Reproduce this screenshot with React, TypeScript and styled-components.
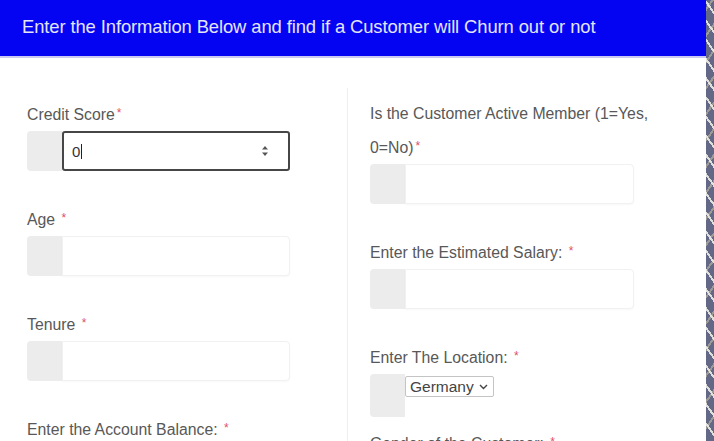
import React from "react";
import styled, { createGlobalStyle } from "styled-components";

const Global = createGlobalStyle`
  html, body { margin: 0; padding: 0; background: #ffffff; }
  body { font-family: "Liberation Sans", Arial, sans-serif; }
`;

const Page = styled.div`
  display: flex;
  width: 714px;
  height: 441px;
  overflow: hidden;
`;

const Main = styled.div`
  flex: 1;
  display: flex;
  flex-direction: column;
  background: #ffffff;
  overflow: hidden;
`;

const Header = styled.div`
  flex-shrink: 0;
  height: 58px;
  box-sizing: border-box;
  padding: 16px 0 0 22px;
  background: #0404f2;
  color: #e4e4fb;
  font-size: 18.4px;
  line-height: 22px;
  border-bottom: 2px solid #c9c9f4;
  letter-spacing: -0.1px;
`;

const Body = styled.div`
  flex: 1;
  display: flex;
  padding: 30px 0 0 27px;
`;

const Column = styled.div<{ $right?: boolean }>`
  box-sizing: border-box;
  width: ${(p) => (p.$right ? "330px" : "320px")};
  flex-shrink: 0;
  padding-top: 9px;
  padding-left: ${(p) => (p.$right ? "22px" : "0")};
  border-left: ${(p) => (p.$right ? "1px solid #efefef" : "none")};
`;

const Field = styled.div<{ $tight?: boolean }>`
  margin-bottom: ${(p) => (p.$tight ? "9px" : "31px")};
`;

const Label = styled.div`
  font-size: 15.8px;
  line-height: 33px;
  color: #585858;
  width: 300px;
`;

const Req = styled.span`
  color: #e0506a;
  font-size: 12px;
  vertical-align: 3px;
  margin-left: 2px;
`;

const Group = styled.div<{ $w: number }>`
  display: flex;
  width: ${(p) => p.$w}px;
  height: 40px;
`;

const Addon = styled.div<{ $h?: number }>`
  width: 35px;
  height: ${(p) => (p.$h ? `${p.$h}px` : "100%")};
  flex-shrink: 0;
  background: #ececec;
  border-radius: 4px 0 0 4px;
`;

const Input = styled.div<{ $focus?: boolean }>`
  flex: 1;
  display: flex;
  align-items: center;
  box-sizing: border-box;
  padding: 0 ${(p) => (p.$focus ? "19px" : "12px")} 0 ${(p) => (p.$focus ? "8px" : "12px")};
  background: #ffffff;
  border: ${(p) => (p.$focus ? "2px solid #464646" : "1px solid #f1f1f1")};
  border-radius: ${(p) => (p.$focus ? "3px" : "0 4px 4px 0")};
  box-shadow: ${(p) => (p.$focus ? "none" : "0 1px 2px rgba(0,0,0,0.03)")};
  font-size: 15px;
  color: #333;
`;

const Value = styled.span`
  flex: 1;
  display: flex;
  align-items: center;
`;

const Caret = styled.span`
  display: inline-block;
  width: 1px;
  height: 15px;
  background: #222;
  margin-left: 1px;
`;

const SelectWrap = styled.div`
  display: flex;
  align-items: flex-start;
`;

const SelectBox = styled.div`
  display: flex;
  align-items: center;
  gap: 5px;
  margin-top: 2px;
  height: 21px;
  box-sizing: border-box;
  padding: 0 5px 0 4px;
  border: 1px solid #c4c4c4;
  border-radius: 2px;
  background: #fff;
  font-size: 15.5px;
  color: #444;
`;

const Strip = styled.div`
  width: 8px;
  flex-shrink: 0;
  background-color: #626886;
  background-image:
    repeating-linear-gradient(55deg, transparent 0 9px, rgba(236,236,228,0.9) 9px 11px),
    repeating-linear-gradient(-55deg, transparent 0 13px, rgba(205,195,165,0.55) 13px 15px);
`;

const Spinner = () => (
  <svg width="8" height="12" viewBox="0 0 8 12">
    <path d="M4 1 L7 4.5 H1 Z" fill="#555" />
    <path d="M4 11 L7 7.5 H1 Z" fill="#555" />
  </svg>
);

const Chevron = () => (
  <svg width="9" height="6" viewBox="0 0 9 6">
    <path d="M1 1 L4.5 4.5 L8 1" fill="none" stroke="#444" strokeWidth="1.4" />
  </svg>
);

const TextField = ({ label, focus, value, width }: { label: React.ReactNode; focus?: boolean; value?: string; width: number }) => (
  <Field>
    <Label>{label}</Label>
    <Group $w={width}>
      <Addon />
      <Input $focus={focus}>
        {value !== undefined && (
          <>
            <Value>
              {value}
              <Caret />
            </Value>
            <Spinner />
          </>
        )}
      </Input>
    </Group>
  </Field>
);

export default function App() {
  return (
    <Page>
      <Global />
      <Main>
        <Header>Enter the Information Below and find if a Customer will Churn out or not</Header>
        <Body>
          <Column>
            <TextField width={263} focus value="0" label={<>Credit Score<Req>*</Req></>} />
            <TextField width={263} label={<>Age <Req>*</Req></>} />
            <TextField width={263} label={<>Tenure <Req>*</Req></>} />
            <Field>
              <Label>Enter the Account Balance: <Req>*</Req></Label>
            </Field>
          </Column>
          <Column $right>
            <TextField width={264} label={<>Is the Customer Active Member (1=Yes, 0=No)<Req>*</Req></>} />
            <TextField width={264} label={<>Enter the Estimated Salary: <Req>*</Req></>} />
            <Field $tight>
              <Label>Enter The Location: <Req>*</Req></Label>
              <SelectWrap>
                <Addon $h={43} />
                <SelectBox>
                  Germany
                  <Chevron />
                </SelectBox>
              </SelectWrap>
            </Field>
            <Field>
              <Label>Gender of the Customer: <Req>*</Req></Label>
            </Field>
          </Column>
        </Body>
      </Main>
      <Strip />
    </Page>
  );
}
